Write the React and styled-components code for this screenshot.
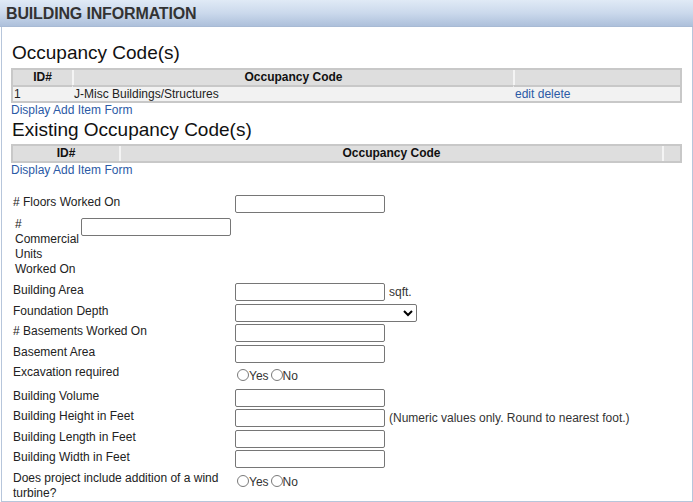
import styled, { createGlobalStyle } from 'styled-components';

const GlobalStyle = createGlobalStyle`
  html, body {
    margin: 0;
    padding: 0;
    background: #fff;
  }
  body {
    font-family: "Liberation Sans", Arial, sans-serif;
    font-size: 12px;
    color: #222;
  }
`;

const occupancyRows = [{ id: 1, code: 'J-Misc Buildings/Structures' }];

export default function App() {
  return (
    <>
      <GlobalStyle />
      <Header>
        <Title>BUILDING INFORMATION</Title>
      </Header>
      <Panel>
        <Heading $top={15} $bottom={4}>Occupancy Code(s)</Heading>
        <Grid>
          <colgroup>
            <col style={{ width: 59 }} />
            <col style={{ width: 441 }} />
            <col style={{ width: 167 }} />
          </colgroup>
          <thead>
            <tr>
              <Th>ID#</Th>
              <Th>Occupancy Code</Th>
              <Th />
            </tr>
          </thead>
          <tbody>
            {occupancyRows.map((row) => (
              <tr key={row.id}>
                <Td>{row.id}</Td>
                <Td>{row.code}</Td>
                <Td>
                  <Link href="#">edit</Link> <Link href="#">delete</Link>
                </Td>
              </tr>
            ))}
          </tbody>
        </Grid>
        <Link href="#" $block>Display Add Item Form</Link>

        <Heading $top={2} $bottom={3}>Existing Occupancy Code(s)</Heading>
        <Grid>
          <colgroup>
            <col style={{ width: 106 }} />
            <col style={{ width: 543 }} />
            <col style={{ width: 18 }} />
          </colgroup>
          <thead>
            <tr>
              <Th>ID#</Th>
              <Th>Occupancy Code</Th>
              <Th />
            </tr>
          </thead>
        </Grid>
        <Link href="#" $block>Display Add Item Form</Link>

        <Form>
          <Row>
            <Label># Floors Worked On</Label>
            <Field><TextInput /></Field>
          </Row>
          <NarrowRow>
            <NarrowLabel># Commercial Units Worked On</NarrowLabel>
            <Field><TextInput /></Field>
          </NarrowRow>
          <Row>
            <Label>Building Area</Label>
            <Field><TextInput /><Note>sqft.</Note></Field>
          </Row>
          <Row>
            <Label>Foundation Depth</Label>
            <Field>
              <Select defaultValue="">
                <option value="" />
                <option value="shallow">Shallow</option>
                <option value="deep">Deep</option>
              </Select>
            </Field>
          </Row>
          <Row>
            <Label># Basements Worked On</Label>
            <Field><TextInput /></Field>
          </Row>
          <Row>
            <Label>Basement Area</Label>
            <Field><TextInput /></Field>
          </Row>
          <Row $height={21}>
            <Label>Excavation required</Label>
            <YesNo name="excavation" />
          </Row>
          <Row>
            <Label>Building Volume</Label>
            <Field><TextInput /></Field>
          </Row>
          <Row>
            <Label>Building Height in Feet</Label>
            <Field>
              <TextInput />
              <Note>(Numeric values only. Round to nearest foot.)</Note>
            </Field>
          </Row>
          <Row>
            <Label>Building Length in Feet</Label>
            <Field><TextInput /></Field>
          </Row>
          <Row>
            <Label>Building Width in Feet</Label>
            <Field><TextInput /></Field>
          </Row>
          <Row>
            <Label $lineHeight={15}>Does project include addition of a wind turbine?</Label>
            <YesNo name="turbine" />
          </Row>
        </Form>
      </Panel>
    </>
  );
}

function YesNo({ name }) {
  return (
    <Radios>
      <Radio type="radio" name={name} id={`${name}-yes`} />
      <RadioText htmlFor={`${name}-yes`}>Yes</RadioText>
      <Radio type="radio" name={name} id={`${name}-no`} />
      <RadioText htmlFor={`${name}-no`}>No</RadioText>
    </Radios>
  );
}

const Header = styled.div`
  height: 27px;
  box-sizing: border-box;
  padding: 1px 0 0 6px;
  background: linear-gradient(to bottom, #e0eaf6 0%, #cbd9ec 50%, #adc0db 100%);
  border-bottom: 1px solid #a8bad4;
`;

const Title = styled.h1`
  margin: 0;
  font-size: 16px;
  line-height: 25px;
  font-weight: bold;
  color: #333;
  letter-spacing: -0.15px;
`;

const Panel = styled.div`
  margin-left: 1px;
  width: 692px;
  height: 475px;
  box-sizing: border-box;
  border: 1px solid #b7c6db;
  border-top: none;
  padding: 0 0 0 9px;
  overflow: hidden;
`;

const Heading = styled.h2`
  margin: ${(p) => p.$top}px 0 ${(p) => p.$bottom}px 1px;
  font-size: 19px;
  line-height: 22px;
  font-weight: normal;
  color: #111;
`;

const Grid = styled.table`
  width: 671px;
  box-sizing: border-box;
  table-layout: fixed;
  border-collapse: separate;
  border-spacing: 0;
  border: 2px solid #c8c8c8;
`;

const Th = styled.th`
  height: 15px;
  padding: 0 2px;
  background: #dedede;
  font-size: 12px;
  line-height: 15px;
  font-weight: bold;
  color: #111;
  text-align: center;

  & + & {
    border-left: 2px solid #f4f4f4;
  }
`;

const Td = styled.td`
  height: 14px;
  padding: 0 1px;
  background: #f2f2f2;
  border-top: 2px solid #c8c8c8;
  font-size: 12px;
  line-height: 14px;
  color: #222;
  white-space: nowrap;

  & + & {
    border-left: 1px solid #f2f2f2;
  }
`;

const Link = styled.a`
  display: ${(p) => (p.$block ? 'block' : 'inline')};
  color: #2b5aa6;
  text-decoration: none;
  font-size: 12px;
  line-height: 14px;
`;

const Form = styled.div`
  margin-top: 18px;
  width: 671px;
`;

const Row = styled.div`
  display: grid;
  grid-template-columns: 224px 1fr;
  align-items: start;
  min-height: ${(p) => p.$height || 18}px;
  margin-bottom: 2.5px;
`;

const Label = styled.div`
  padding-left: 2px;
  padding-right: 6px;
  line-height: ${(p) => p.$lineHeight || 14}px;
  color: #222;
`;

const NarrowRow = styled.div`
  display: grid;
  grid-template-columns: 70px 1fr;
  align-items: start;
  padding-top: 1.5px;
  margin-bottom: 6px;
`;

const NarrowLabel = styled.div`
  padding-left: 4px;
  line-height: 15px;
  color: #222;
`;

const Field = styled.div`
  display: flex;
  align-items: center;

  ${NarrowRow} & {
    margin-top: 0.5px;
  }
`;

const TextInput = styled.input.attrs({ type: 'text' })`
  width: 150px;
  height: 18px;
  box-sizing: border-box;
  margin: 0;
  padding: 1px 2px;
  border: 1px solid #767676;
  border-radius: 2px;
  background: #fff;
  font-family: "Liberation Sans", Arial, sans-serif;
  font-size: 12px;
`;

const Select = styled.select`
  width: 182px;
  height: 18px;
  box-sizing: border-box;
  margin: 0;
  padding: 0 2px;
  border: 1px solid #767676;
  border-radius: 2px;
  background: #fff;
  font-family: "Liberation Sans", Arial, sans-serif;
  font-size: 12px;
  color: #000;
`;

const Note = styled.span`
  margin-left: 4px;
  color: #333;
  line-height: 14px;
`;

const Radios = styled.div`
  display: flex;
  align-items: flex-start;
  padding-top: 3px;
  line-height: 14px;
`;

const Radio = styled.input`
  appearance: none;
  width: 12px;
  height: 12px;
  box-sizing: border-box;
  margin: 1px 0 0 2px;
  border: 1px solid #7a7a7a;
  border-radius: 50%;
  background: #fff;

  & + label + & {
    margin-left: 2px;
  }
`;

const RadioText = styled.label`
  color: #333;
  font-size: 12px;
  line-height: 14px;
  padding-top: 1px;
`;
